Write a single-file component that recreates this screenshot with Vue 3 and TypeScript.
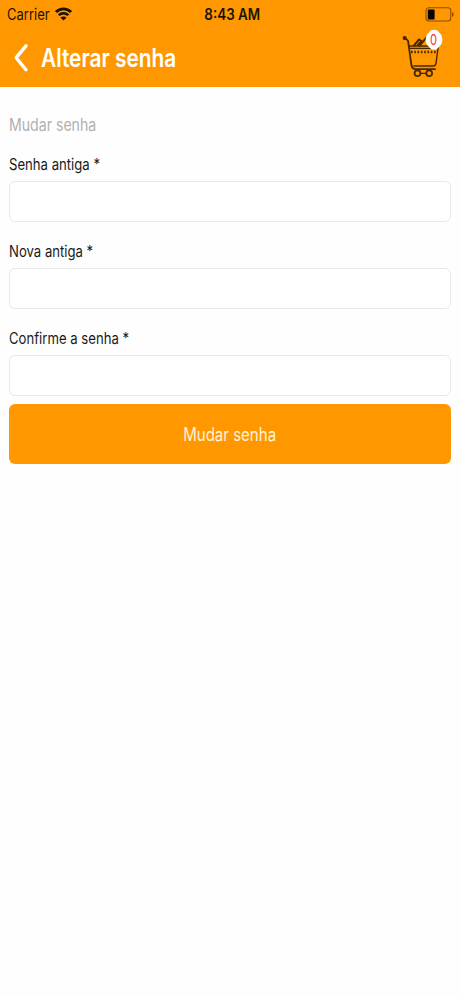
<script setup lang="ts">
import { ref } from 'vue'

interface Field {
  id: string
  label: string
}

const fields: Field[] = [
  { id: 'old', label: 'Senha antiga *' },
  { id: 'new', label: 'Nova antiga *' },
  { id: 'confirm', label: 'Confirme a senha *' },
]
const values = ref<Record<string, string>>({ old: '', new: '', confirm: '' })
const cartCount = ref(0)
</script>

<template>
  <div class="screen">
    <header class="header">
      <div class="status">
        <div class="carrier">
          <span class="carrier-name">Carrier</span>
          <svg class="wifi" width="17" height="14" viewBox="0 0 16 14" preserveAspectRatio="none" fill="none" stroke="#1c1200">
            <path d="M0.9 5C4.9 0.7 11.1 0.7 15.1 5" stroke-width="2.8" />
            <path d="M3.5 8.3C6.1 5.5 9.9 5.5 12.5 8.3" stroke-width="2.4" />
            <path d="M8 13.6L5.2 10.7C6.8 9.2 9.2 9.2 10.8 10.7Z" fill="#1c1200" stroke="none" />
          </svg>
        </div>
        <span class="time">8:43 AM</span>
        <svg class="battery" width="29" height="16" viewBox="0 0 29 16">
          <rect x="1" y="0.8" width="24.8" height="13.2" rx="3" fill="none" stroke="#8a4f00" stroke-width="1.1" />
          <rect x="2.8" y="2.4" width="6.8" height="10" rx="1" fill="#090500" />
          <path d="M27.2 5.1C29.1 6 29.1 8.8 27.2 9.7Z" fill="#8a3b00" />
        </svg>
      </div>
      <div class="nav">
        <svg class="back" width="16" height="30" viewBox="0 0 16 30" fill="none" stroke="#fff" stroke-width="3.4" stroke-linecap="round" stroke-linejoin="round">
          <path d="M13 2.8L3.2 14.7L13 26.8" />
        </svg>
        <h1 class="title">Alterar senha</h1>
        <div class="cart">
          <svg width="38" height="43" viewBox="0 0 38 43" fill="none" stroke="#472900" stroke-width="1.8" stroke-linecap="round" stroke-linejoin="round">
            <circle cx="2.6" cy="3" r="1.5" fill="#472900" stroke-width="1.1" />
            <path d="M3.5 3.5L6 5.6L9.4 30Q10 33.6 13 34.2H33" />
            <path d="M7 11H36.3L34 28.5Q33.5 31 31 31H12" stroke-width="1.4" />
            <path d="M8 13.3H35.5" stroke-width="1.2" />
            <path d="M9 17H34.5" stroke-width="2.4" stroke-dasharray="1.6 1.7" stroke-linecap="butt" />
            <path d="M12 10.5L17 4.5L19.5 6L16 10M17.5 10.5L25 2L29 4" stroke-width="2" />
            <path d="M18 38.3H24" stroke-width="1.3" />
            <circle cx="15.5" cy="38.2" r="2.9" fill="#ff9800" />
            <circle cx="27.2" cy="38.2" r="2.9" fill="#ff9800" />
          </svg>
          <span class="badge">
            <svg class="badge-shape" width="18" height="22" viewBox="0 0 18 22">
              <path d="M6 1.3Q9 0.4 12 1.3L16 5.5Q18.8 11 16 15.8L12 20Q9 21.4 6 20L2 15.8Q-0.8 11 2 5.5Z" fill="#fff" />
            </svg>
            <span class="count">{{ cartCount }}</span>
          </span>
        </div>
      </div>
    </header>

    <form class="form" @submit.prevent>
      <h2 class="section">Mudar senha</h2>
      <div v-for="field in fields" :key="field.id" class="field">
        <label :for="field.id" class="label">{{ field.label }}</label>
        <input :id="field.id" v-model="values[field.id]" class="input" type="password" />
      </div>
      <button class="submit" type="submit"><span class="submit-text">Mudar senha</span></button>
    </form>
  </div>
</template>

<style>
body {
  margin: 0;
  background: #fefefe;
}
</style>

<style scoped>
.screen {
  width: 460px;
  height: 996px;
  overflow: hidden;
  background: #fefefe;
  font-family: Inter, "Liberation Sans", sans-serif;
}
.header {
  height: 87px;
  background: #ff9800;
}
.status {
  display: grid;
  grid-template-columns: 1fr auto 1fr;
  align-items: center;
  height: 29px;
  padding: 0 6px 0 7px;
  color: #1c1200;
}
.carrier {
  display: flex;
  align-items: center;
}
.carrier-name {
  width: 48px;
  font-size: 15.5px;
  line-height: 30px;
  transform: scaleX(0.84);
  transform-origin: left;
}
.wifi {
  margin-top: -2px;
}
.time {
  margin-left: 3px;
  font-size: 15.5px;
  font-weight: 600;
  line-height: 28px;
  white-space: nowrap;
  transform: scaleX(0.865);
}
.battery {
  justify-self: end;
}
.nav {
  display: flex;
  align-items: center;
  height: 57px;
  padding: 0 20px 0 13px;
}
.title {
  flex: 1;
  margin: 0 0 0 12px;
  color: #fff;
  font-size: 25px;
  font-weight: 600;
  line-height: 40px;
  white-space: nowrap;
  transform: scaleX(0.834);
  transform-origin: left;
}
.cart {
  position: relative;
  width: 38px;
  height: 43px;
  margin-top: -3px;
}
.badge {
  position: absolute;
  top: -6px;
  left: 23px;
  display: grid;
  place-items: center;
  width: 18px;
  height: 22px;
}
.badge-shape,
.count {
  grid-area: 1 / 1;
}
.count {
  color: #e5343d;
  font-size: 14.5px;
  line-height: 20px;
  transform: scaleX(0.76);
}
.form {
  display: flex;
  flex-direction: column;
  padding: 25px 9px 0;
}
.section {
  margin: 0 0 13px;
  color: #b0b0b0;
  font-size: 17px;
  font-weight: 400;
  line-height: 26px;
  transform: scaleX(0.83);
  transform-origin: left;
}
.field {
  display: flex;
  flex-direction: column;
  height: 87.1px;
}
.field:nth-of-type(3) {
  height: 79px;
}
.label {
  height: 30px;
  color: #1a1a1a;
  font-size: 15.5px;
  line-height: 26px;
  white-space: nowrap;
  transform: translateY(0.5px) scaleX(0.847);
  transform-origin: left;
}
.input {
  box-sizing: border-box;
  width: 442px;
  height: 41px;
  padding: 0 10px;
  border: 1px solid #e8e8e8;
  border-radius: 6px;
  outline: none;
  background: #fff;
}
.submit {
  height: 59.5px;
  padding: 0;
  border: 0;
  border-radius: 6px;
  background: #ff9800;
  color: #fff3d8;
  font-family: inherit;
}
.submit-text {
  display: inline-block;
  font-size: 18px;
  line-height: 26px;
  transform: translateY(0.5px) scaleX(0.835);
}
</style>
